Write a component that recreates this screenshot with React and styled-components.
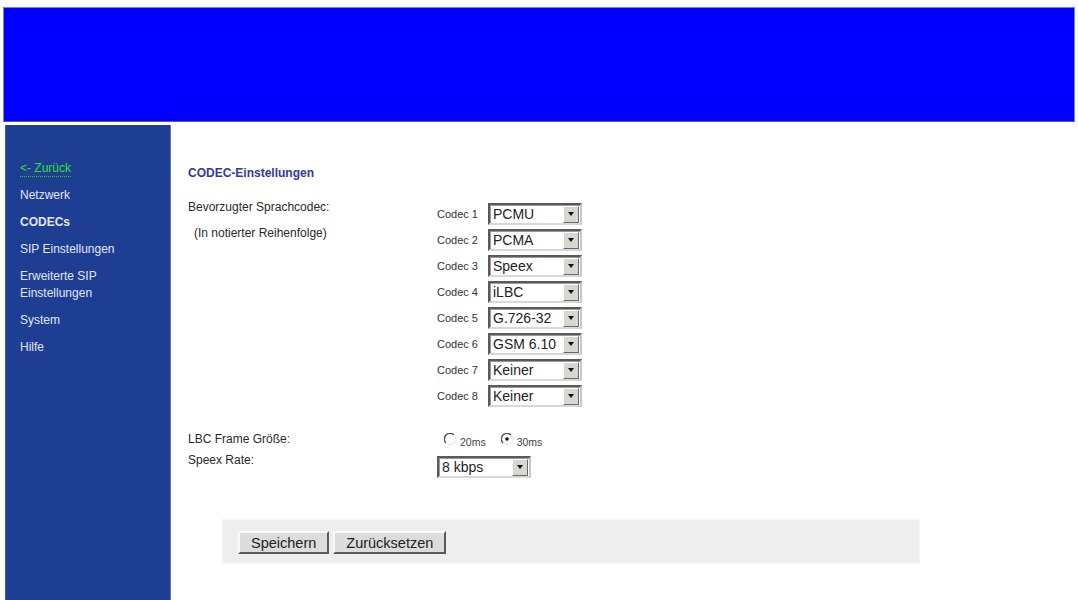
import React from 'react';
import styled, { createGlobalStyle } from 'styled-components';

const GlobalStyle = createGlobalStyle`
  html, body {
    margin: 0;
    padding: 0;
    background: #ffffff;
    font-family: "Liberation Sans", Arial, sans-serif;
  }
`;

// ========================頁面框架========================

const Page = styled.div`
  padding: 7px 3px 0 3px;
  min-height: 100vh;
  box-sizing: border-box;
  display: flex;
  flex-direction: column;
`;

const Banner = styled.div`
  height: 113px;
  background: #0000ff;
  border: 1px solid #7a7aff;
  border-bottom-color: #4a58b8;
`;

const Body = styled.div`
  flex: 1;
  display: flex;
  margin-top: 3px;
  padding-left: 2px;
`;

// ========================左側選單========================

const Sidebar = styled.nav`
  width: 164px;
  background: #1d3e93;
  border-left: 1px solid #3f5aa6;
  border-right: 1px solid #6379b8;
  padding-top: 30px;
  box-sizing: content-box;
`;

const NavList = styled.ul`
  list-style: none;
  margin: 0;
  padding: 0 0 0 14px;
`;

const NavItem = styled.li`
  padding: 5px 0;
  font-size: 12px;
  line-height: 17px;
  color: ${(props) => (props.$back ? '#2ee02e' : '#e2e6f4')};
  font-weight: ${(props) => (props.$active ? 'bold' : 'normal')};
`;

const BackLink = styled.span`
  text-decoration: underline dotted #2ec02e;
  text-underline-offset: 4px;
`;

// ========================表單內容========================

const Main = styled.main`
  flex: 1;
  padding: 41px 0 0 17px;
`;

const Title = styled.h2`
  margin: 0 0 20px 0;
  font-size: 12px;
  line-height: 14px;
  font-weight: bold;
  color: #35389a;
`;

const FormGrid = styled.div`
  display: grid;
  grid-template-columns: 249px auto;
  align-items: start;
`;

const Label = styled.div`
  font-size: 12px;
  line-height: 14px;
  color: #2a2a2a;
  margin-top: ${(props) => props.$top || 0}px;
  padding-left: ${(props) => props.$indent || 0}px;
`;

const Cell = styled.div`
  margin-top: ${(props) => props.$top || 0}px;
`;

const CodecList = styled.div`
  display: flex;
  flex-direction: column;
  gap: 4px;
  margin-top: 3px;
`;

const CodecRow = styled.div`
  display: flex;
  align-items: center;
`;

const CodecName = styled.span`
  width: 51px;
  font-size: 11px;
  color: #333;
`;

const SelectBox = styled.div`
  width: 94px;
  height: 22px;
  box-sizing: border-box;
  display: flex;
  align-items: center;
  background: #ffffff;
  border: 2px solid;
  border-color: #5a5a5a #c8c8c8 #d8d8d8 #5a5a5a;
  box-shadow: inset 1px 1px 0 #9a9a9a;
`;

const SelectText = styled.span`
  flex: 1;
  padding-left: 3px;
  font-size: 14px;
  color: #222;
  white-space: nowrap;
  overflow: hidden;
`;

const SelectArrow = styled.span`
  width: 16px;
  height: 17px;
  margin-right: 1px;
  box-sizing: border-box;
  background: #d8d6d0;
  border: 1px solid;
  border-color: #ffffff #6a6a6a #6a6a6a #ffffff;
  display: flex;
  align-items: center;
  justify-content: center;

  &::after {
    content: '';
    border-left: 3.5px solid transparent;
    border-right: 3.5px solid transparent;
    border-top: 4px solid #111;
  }
`;

const RadioGroup = styled.div`
  display: flex;
  align-items: center;
  margin-left: 7px;
  height: 14px;
`;

const RadioOption = styled.label`
  display: flex;
  align-items: center;
  margin-right: 15px;
`;

const RadioText = styled.span`
  font-size: 10.5px;
  color: #444;
  margin-left: 4px;
  position: relative;
  top: 3px;
`;

const ButtonBar = styled.div`
  margin: 41px 0 0 34px;
  width: 698px;
  height: 45px;
  box-sizing: border-box;
  padding: 11px 15px;
  background: #eeeeee;
  border: 1px solid #f4f4f4;
  display: flex;
  gap: 4px;
`;

const Button = styled.button`
  height: 23px;
  padding: 0 11px;
  font-family: "Liberation Sans", Arial, sans-serif;
  font-size: 14.5px;
  color: #222;
  background: #dcdcdc;
  border: 2px solid;
  border-color: #f8f8f8 #5a5a5a #5a5a5a #f8f8f8;
  cursor: pointer;
`;

const Select = ({ value }) => (
  <SelectBox>
    <SelectText>{value}</SelectText>
    <SelectArrow />
  </SelectBox>
);

const Radio = ({ checked }) => (
  <svg width="12" height="12" viewBox="0 0 12 12">
    <circle cx="6" cy="6" r="5.5" fill="#ffffff" />
    <path d="M10 2 A5.5 5.5 0 0 0 2 10" fill="none" stroke="#555" strokeWidth="1.4" />
    <path d="M2 10 A5.5 5.5 0 0 0 10 2" fill="none" stroke="#e4e4e4" strokeWidth="1" />
    {checked && <circle cx="6" cy="6" r="1.8" fill="#111" />}
  </svg>
);

const codecs = ['PCMU', 'PCMA', 'Speex', 'iLBC', 'G.726-32', 'GSM 6.10', 'Keiner', 'Keiner'];

const navItems = [
  { label: 'Netzwerk' },
  { label: 'CODECs', active: true },
  { label: 'SIP Einstellungen' },
  { label: ['Erweiterte SIP', 'Einstellungen'] },
  { label: 'System' },
  { label: 'Hilfe' },
];

const App = () => {
  return (
    <>
      <GlobalStyle />
      <Page>
        <Banner />
        <Body>
          <Sidebar>
            <NavList>
              <NavItem $back>
                <BackLink>&lt;- Zurück</BackLink>
              </NavItem>
              {navItems.map((item, i) => (
                <NavItem key={i} $active={item.active}>
                  {Array.isArray(item.label) ? (
                    <>
                      {item.label[0]}
                      <br />
                      {item.label[1]}
                    </>
                  ) : (
                    item.label
                  )}
                </NavItem>
              ))}
            </NavList>
          </Sidebar>

          <Main>
            <Title>CODEC-Einstellungen</Title>
            <FormGrid>
              <div>
                <Label>Bevorzugter Sprachcodec:</Label>
                <Label $top={12} $indent={6}>
                  (In notierter Reihenfolge)
                </Label>
              </div>
              <CodecList>
                {codecs.map((c, i) => (
                  <CodecRow key={i}>
                    <CodecName>Codec {i + 1}</CodecName>
                    <Select value={c} />
                  </CodecRow>
                ))}
              </CodecList>

              <Label $top={25}>LBC Frame Größe:</Label>
              <Cell $top={25}>
                <RadioGroup>
                  <RadioOption>
                    <Radio />
                    <RadioText>20ms</RadioText>
                  </RadioOption>
                  <RadioOption>
                    <Radio checked />
                    <RadioText>30ms</RadioText>
                  </RadioOption>
                </RadioGroup>
              </Cell>

              <Label $top={7}>Speex Rate:</Label>
              <Cell $top={10}>
                <Select value="8 kbps" />
              </Cell>
            </FormGrid>

            <ButtonBar>
              <Button>Speichern</Button>
              <Button>Zurücksetzen</Button>
            </ButtonBar>
          </Main>
        </Body>
      </Page>
    </>
  );
};

export default App;
